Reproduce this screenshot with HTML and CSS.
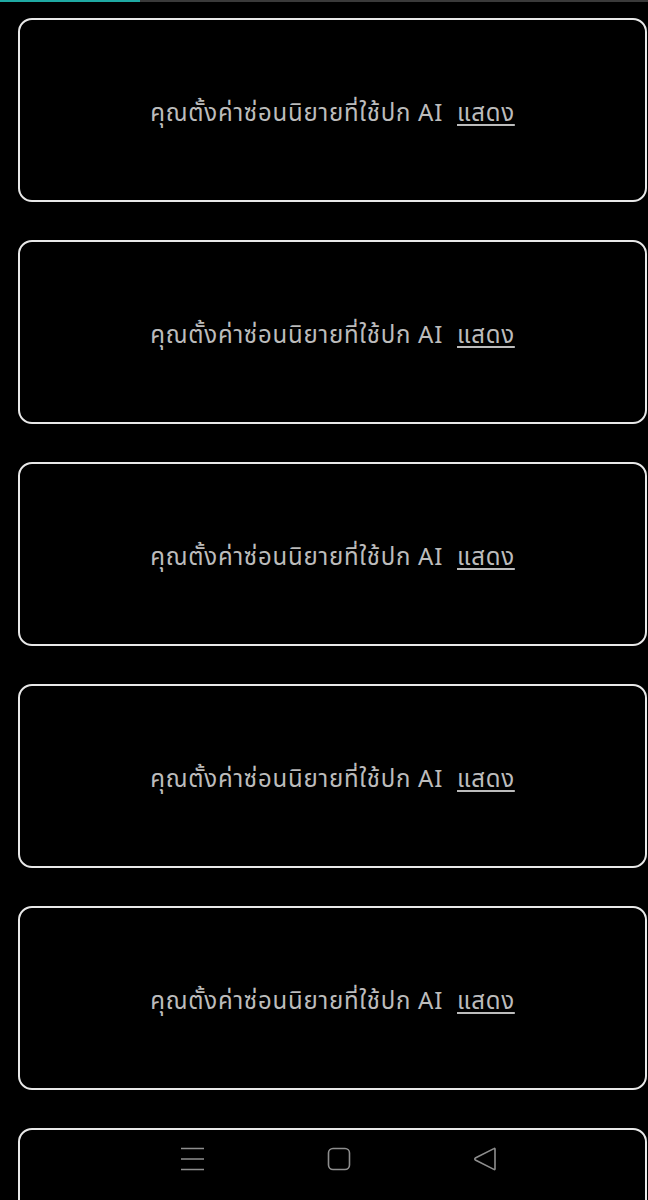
FILE: index.html
```html
<!DOCTYPE html>
<html lang="th">
<head>
<meta charset="utf-8">
<link rel="stylesheet" href="styles.css">
</head>
<body>
<div class="progress"><div class="progress-fill"></div></div>
<div class="list">
  <div class="card"><p class="notice">คุณตั้งค่าซ่อนนิยายที่ใช้ปก AI <a class="show" href="#">แสดง</a></p></div>
  <div class="card"><p class="notice">คุณตั้งค่าซ่อนนิยายที่ใช้ปก AI <a class="show" href="#">แสดง</a></p></div>
  <div class="card"><p class="notice">คุณตั้งค่าซ่อนนิยายที่ใช้ปก AI <a class="show" href="#">แสดง</a></p></div>
  <div class="card"><p class="notice">คุณตั้งค่าซ่อนนิยายที่ใช้ปก AI <a class="show" href="#">แสดง</a></p></div>
  <div class="card"><p class="notice">คุณตั้งค่าซ่อนนิยายที่ใช้ปก AI <a class="show" href="#">แสดง</a></p></div>
  <div class="card card-partial"></div>
</div>
<nav class="navbar">
  <svg class="nav-icon" width="26" height="26" viewBox="0 0 26 26" fill="none" stroke="#8e8e8e" stroke-width="1.6">
    <path d="M1 2.5H24M1 13H24M1 23.5H24"/>
  </svg>
  <svg class="nav-icon" width="26" height="26" viewBox="0 0 26 26" fill="none" stroke="#8e8e8e" stroke-width="1.6">
    <rect x="2.5" y="2.5" width="21" height="21" rx="4.5"/>
  </svg>
  <svg class="nav-icon" width="26" height="26" viewBox="0 0 26 26" fill="none" stroke="#8e8e8e" stroke-width="1.6" stroke-linejoin="round">
    <path d="M23 3.2V22.8Q23 24 21.9 23.4L3.3 14Q2.3 13 3.3 12L21.9 2.6Q23 2 23 3.2Z"/>
  </svg>
</nav>
</body>
</html>
```
FILE: styles.css
```css
html, body {
  margin: 0;
  padding: 0;
  background: #000;
}
body {
  width: 648px;
  height: 1200px;
  overflow: hidden;
  position: relative;
  font-family: "Noto Sans Thai", "Noto Sans", "Liberation Sans", sans-serif;
}
.progress {
  height: 2px;
  background: #3a3a3a;
}
.progress-fill {
  width: 140px;
  height: 2px;
  background: #1fa9a3;
}
.list {
  display: flex;
  flex-direction: column;
  gap: 38px;
  padding: 16px 1px 0 18px;
}
.card {
  height: 180px;
  flex: none;
  box-sizing: content-box;
  border: 2px solid #e8e8e8;
  border-radius: 14px;
  display: flex;
  align-items: center;
  justify-content: center;
}
.notice {
  margin: 8px 0 0 0;
  color: #bcbcbc;
  font-size: 24px;
  line-height: 34px;
  letter-spacing: 0.75px;
  white-space: pre;
}
.show {
  color: #bcbcbc;
  text-decoration: underline;
  text-underline-offset: 3px;
  text-decoration-thickness: 1.5px;
  margin-left: 7px;
}
.navbar {
  position: absolute;
  left: 0;
  right: 0;
  bottom: 28px;
  display: flex;
  justify-content: center;
  gap: 120px;
  padding-left: 30px;
}
.nav-icon {
  display: block;
}
```
